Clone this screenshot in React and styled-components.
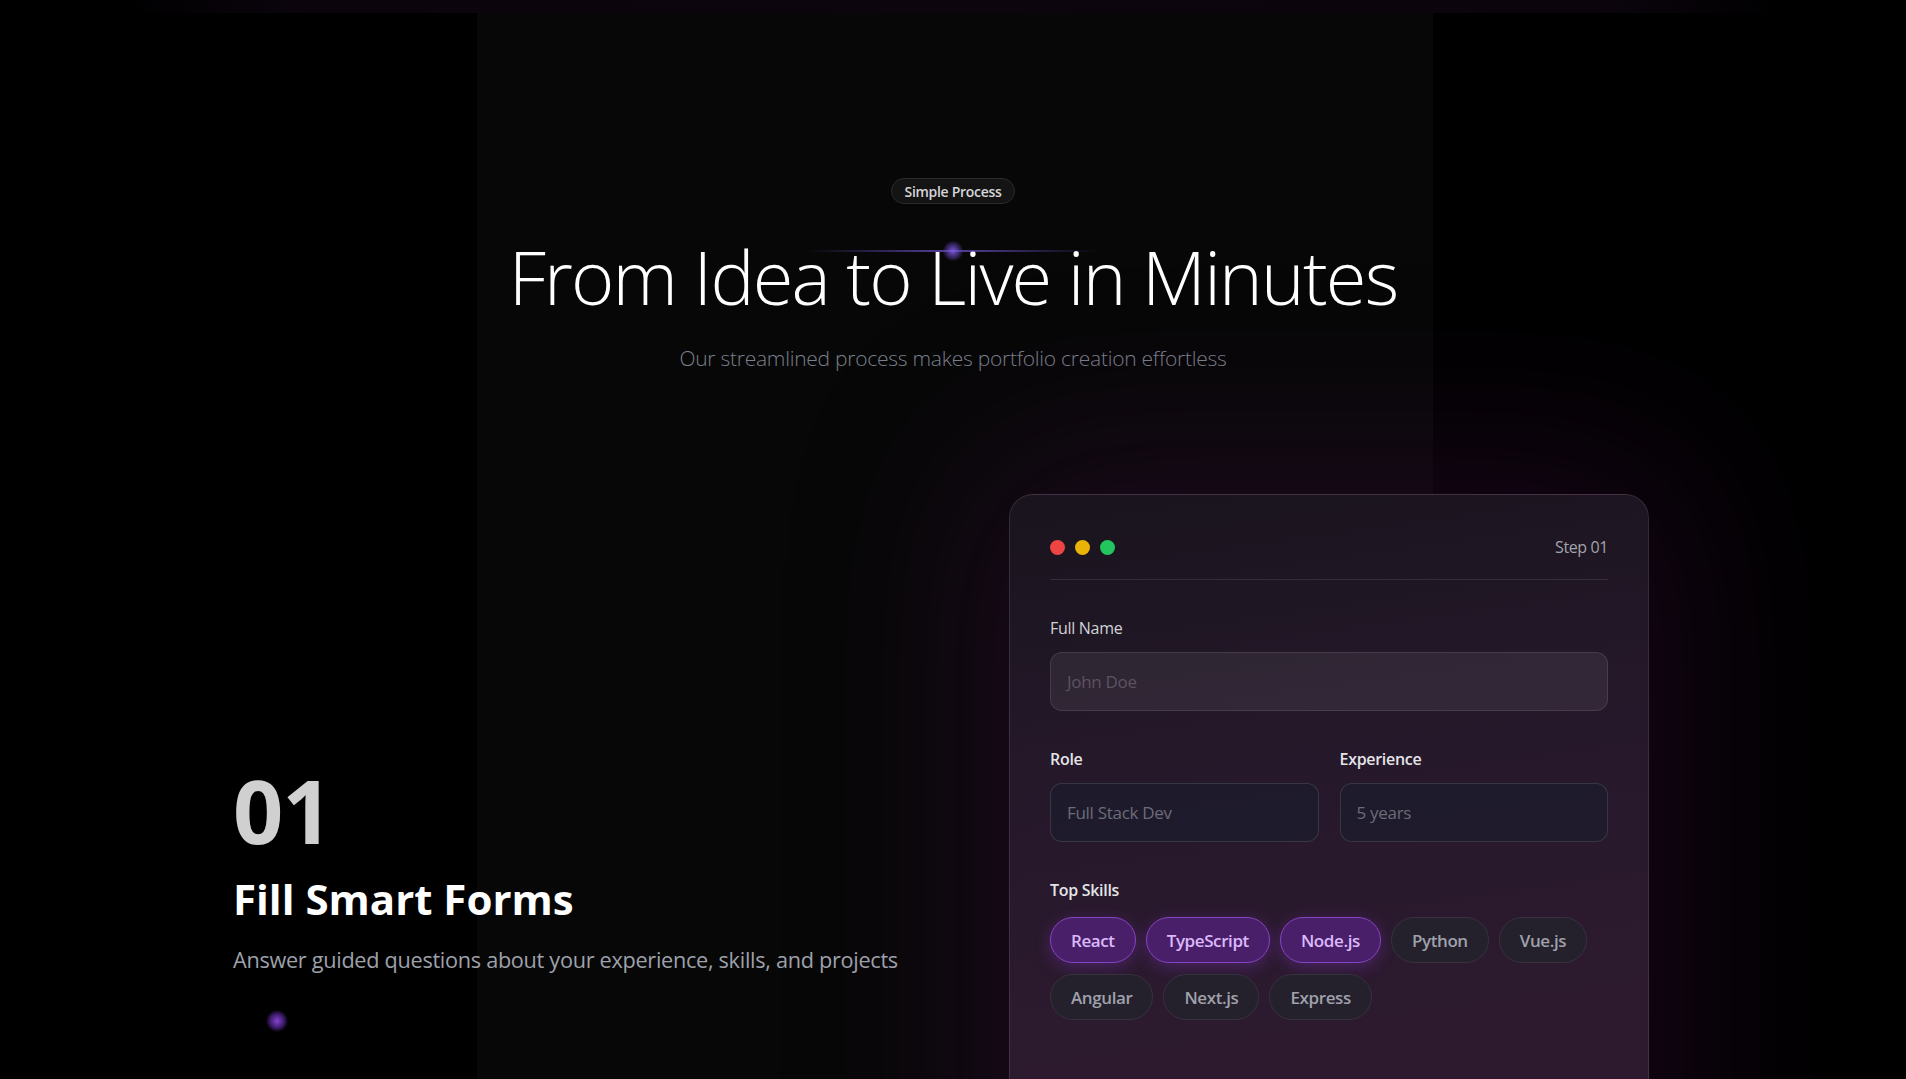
import React from "react";
import styled, { createGlobalStyle } from "styled-components";

const Global = createGlobalStyle`
  html, body {
    margin: 0;
    padding: 0;
    background: #000;
    overflow: hidden;
  }
  * { box-sizing: border-box; }
  body {
    font-family: "Open Sans", "Noto Sans", sans-serif;
    color: #fff;
  }
`;

const Page = styled.main`
  position: relative;
  min-height: 1079px;
  background: linear-gradient(
    90deg,
    #000 0%,
    #000 25%,
    #070707 25%,
    #070707 75.2%,
    #000 75.2%
  );
`;

const TopGlow = styled.div`
  height: 13px;
  background: linear-gradient(
    90deg,
    transparent 6%,
    #0b040d 16%,
    #0c050e 50%,
    #0b040d 84%,
    transparent 94%
  );
`;

const Intro = styled.header`
  display: flex;
  flex-direction: column;
  align-items: center;
  padding-top: 165px;
`;

const Badge = styled.span`
  display: inline-flex;
  align-items: center;
  height: 26px;
  padding: 0 13px;
  border-radius: 999px;
  background: #141414;
  border: 1px solid #2b2b2b;
  color: #d6d6da;
  font-size: 14px;
  font-weight: 600;
  letter-spacing: -0.3px;
`;

const TitleWrap = styled.div`
  position: relative;
  margin-top: 30px;
`;

const Title = styled.h1`
  margin: 0;
  font-weight: 300;
  font-size: 74px;
  line-height: 1.15;
  letter-spacing: -1.8px;
  color: #fff;
  text-align: center;
`;

const Beam = styled.div`
  position: absolute;
  left: 50%;
  top: 16px;
  width: 290px;
  height: 2px;
  transform: translateX(-50%);
  background: linear-gradient(
    90deg,
    transparent,
    rgba(110, 80, 200, 0.7) 45%,
    rgba(110, 80, 200, 0.7) 55%,
    transparent
  );
  pointer-events: none;

  &::after {
    content: "";
    position: absolute;
    left: 50%;
    top: 50%;
    width: 20px;
    height: 20px;
    border-radius: 50%;
    transform: translate(-50%, -50%);
    background: radial-gradient(
      circle,
      rgba(130, 95, 230, 0.9) 0%,
      rgba(110, 75, 210, 0.45) 45%,
      transparent 75%
    );
  }
`;

const Subtitle = styled.p`
  margin: 25px 0 0;
  font-size: 21px;
  font-weight: 300;
  color: #7b808c;
  letter-spacing: -0.25px;
`;

const StepGrid = styled.section`
  max-width: 1440px;
  margin: 122px auto 0;
  display: grid;
  grid-template-columns: 1fr 1fr;
  column-gap: 64px;
  align-items: start;
`;

const StepText = styled.div`
  position: relative;
  padding-top: 272px;
`;

const StepNumber = styled.div`
  font-size: 88px;
  font-weight: 700;
  line-height: 1;
  color: #d0d0d0;
  letter-spacing: -1px;
`;

const StepTitle = styled.h2`
  margin: 20px 0 0;
  font-size: 42px;
  font-weight: 700;
  line-height: 1.2;
  color: #fff;
  letter-spacing: 0;
`;

const StepDesc = styled.p`
  margin: 21px 0 0;
  font-size: 21.7px;
  font-weight: 400;
  color: #9ea1aa;
  letter-spacing: -0.3px;
`;

const Orb = styled.span`
  position: absolute;
  left: 33px;
  bottom: -58px;
  width: 22px;
  height: 22px;
  border-radius: 50%;
  background: radial-gradient(
    circle,
    rgba(140, 70, 220, 0.95) 0%,
    rgba(110, 50, 190, 0.55) 45%,
    transparent 72%
  );
`;

const Card = styled.div`
  width: 640px;
  margin: 0 auto;
  min-height: 800px;
  padding: 40px 40px;
  border-radius: 24px;
  border: 1px solid rgba(255, 255, 255, 0.1);
  background: linear-gradient(
    172deg,
    #19141d 0%,
    #241829 30%,
    #2c1a2f 60%,
    #30192f 100%
  );
  box-shadow: 0 0 180px 40px rgba(70, 18, 75, 0.33);
`;

const CardHeader = styled.div`
  display: flex;
  align-items: center;
  justify-content: space-between;
  padding-bottom: 20px;
  border-bottom: 1px solid rgba(255, 255, 255, 0.1);
`;

const Dots = styled.div`
  display: flex;
  gap: 10px;
`;

const Dot = styled.span`
  width: 15px;
  height: 15px;
  border-radius: 50%;
  background: ${(p) => p.$color};
`;

const StepTag = styled.span`
  font-size: 16px;
  line-height: 24px;
  color: #a3a3ab;
  letter-spacing: -0.4px;
`;

const Form = styled.div`
  display: flex;
  flex-direction: column;
  gap: 36px;
  margin-top: 36px;
`;

const Field = styled.div`
  display: flex;
  flex-direction: column;
  gap: 12px;
`;

const Label = styled.label`
  font-size: 16px;
  line-height: 24px;
  font-weight: ${(p) => (p.$strong ? 600 : 400)};
  color: ${(p) => (p.$strong ? "#e4e4e8" : "#d2d2d8")};
  letter-spacing: -0.3px;
`;

const Input = styled.div`
  height: 59px;
  display: flex;
  align-items: center;
  padding: 0 16px;
  border-radius: 12px;
  font-size: 17px;
  letter-spacing: -0.3px;
  border: 1px solid
    ${(p) => (p.$tone === "soft" ? "rgba(255,255,255,0.1)" : "rgba(150,150,175,0.22)")};
  background: ${(p) =>
    p.$tone === "soft" ? "rgba(255, 255, 255, 0.065)" : "rgba(28, 28, 44, 0.72)"};
  color: ${(p) => (p.$tone === "soft" ? "#5d5262" : "#6c6c78")};
`;

const Row = styled.div`
  display: grid;
  grid-template-columns: 1fr 1fr;
  gap: 21px;
`;

const Chips = styled.div`
  display: flex;
  flex-wrap: wrap;
  gap: 11px 10px;
  margin-top: 3px;
`;

const Chip = styled.span`
  height: 46px;
  display: inline-flex;
  align-items: center;
  padding: 0 20px;
  border-radius: 999px;
  font-size: 17px;
  font-weight: 600;
  letter-spacing: -0.4px;
  border: 1px solid ${(p) => (p.$active ? "#8444c2" : "#36323f")};
  background: ${(p) => (p.$active ? "#4a1f69" : "#24202c")};
  color: ${(p) => (p.$active ? "#dcb9fb" : "#9fa1ab")};
  box-shadow: ${(p) => (p.$active ? "0 4px 16px rgba(150, 60, 230, 0.3)" : "none")};
`;

const skills = [
  { name: "React", active: true },
  { name: "TypeScript", active: true },
  { name: "Node.js", active: true },
  { name: "Python" },
  { name: "Vue.js" },
  { name: "Angular" },
  { name: "Next.js" },
  { name: "Express" },
];

export default function App() {
  return (
    <>
      <Global />
      <Page>
        <TopGlow />
        <Intro>
          <Badge>Simple Process</Badge>
          <TitleWrap>
            <Title>From Idea to Live in Minutes</Title>
            <Beam />
          </TitleWrap>
          <Subtitle>Our streamlined process makes portfolio creation effortless</Subtitle>
        </Intro>

        <StepGrid>
          <StepText>
            <StepNumber>01</StepNumber>
            <StepTitle>Fill Smart Forms</StepTitle>
            <StepDesc>Answer guided questions about your experience, skills, and projects</StepDesc>
            <Orb />
          </StepText>

          <Card>
            <CardHeader>
              <Dots>
                <Dot $color="#ef4444" />
                <Dot $color="#eab308" />
                <Dot $color="#22c55e" />
              </Dots>
              <StepTag>Step 01</StepTag>
            </CardHeader>

            <Form>
              <Field>
                <Label>Full Name</Label>
                <Input $tone="soft">John Doe</Input>
              </Field>

              <Row>
                <Field>
                  <Label $strong>Role</Label>
                  <Input>Full Stack Dev</Input>
                </Field>
                <Field>
                  <Label $strong>Experience</Label>
                  <Input>5 years</Input>
                </Field>
              </Row>

              <Field>
                <Label $strong>Top Skills</Label>
                <Chips>
                  {skills.map((s) => (
                    <Chip key={s.name} $active={s.active}>
                      {s.name}
                    </Chip>
                  ))}
                </Chips>
              </Field>
            </Form>
          </Card>
        </StepGrid>
      </Page>
    </>
  );
}
